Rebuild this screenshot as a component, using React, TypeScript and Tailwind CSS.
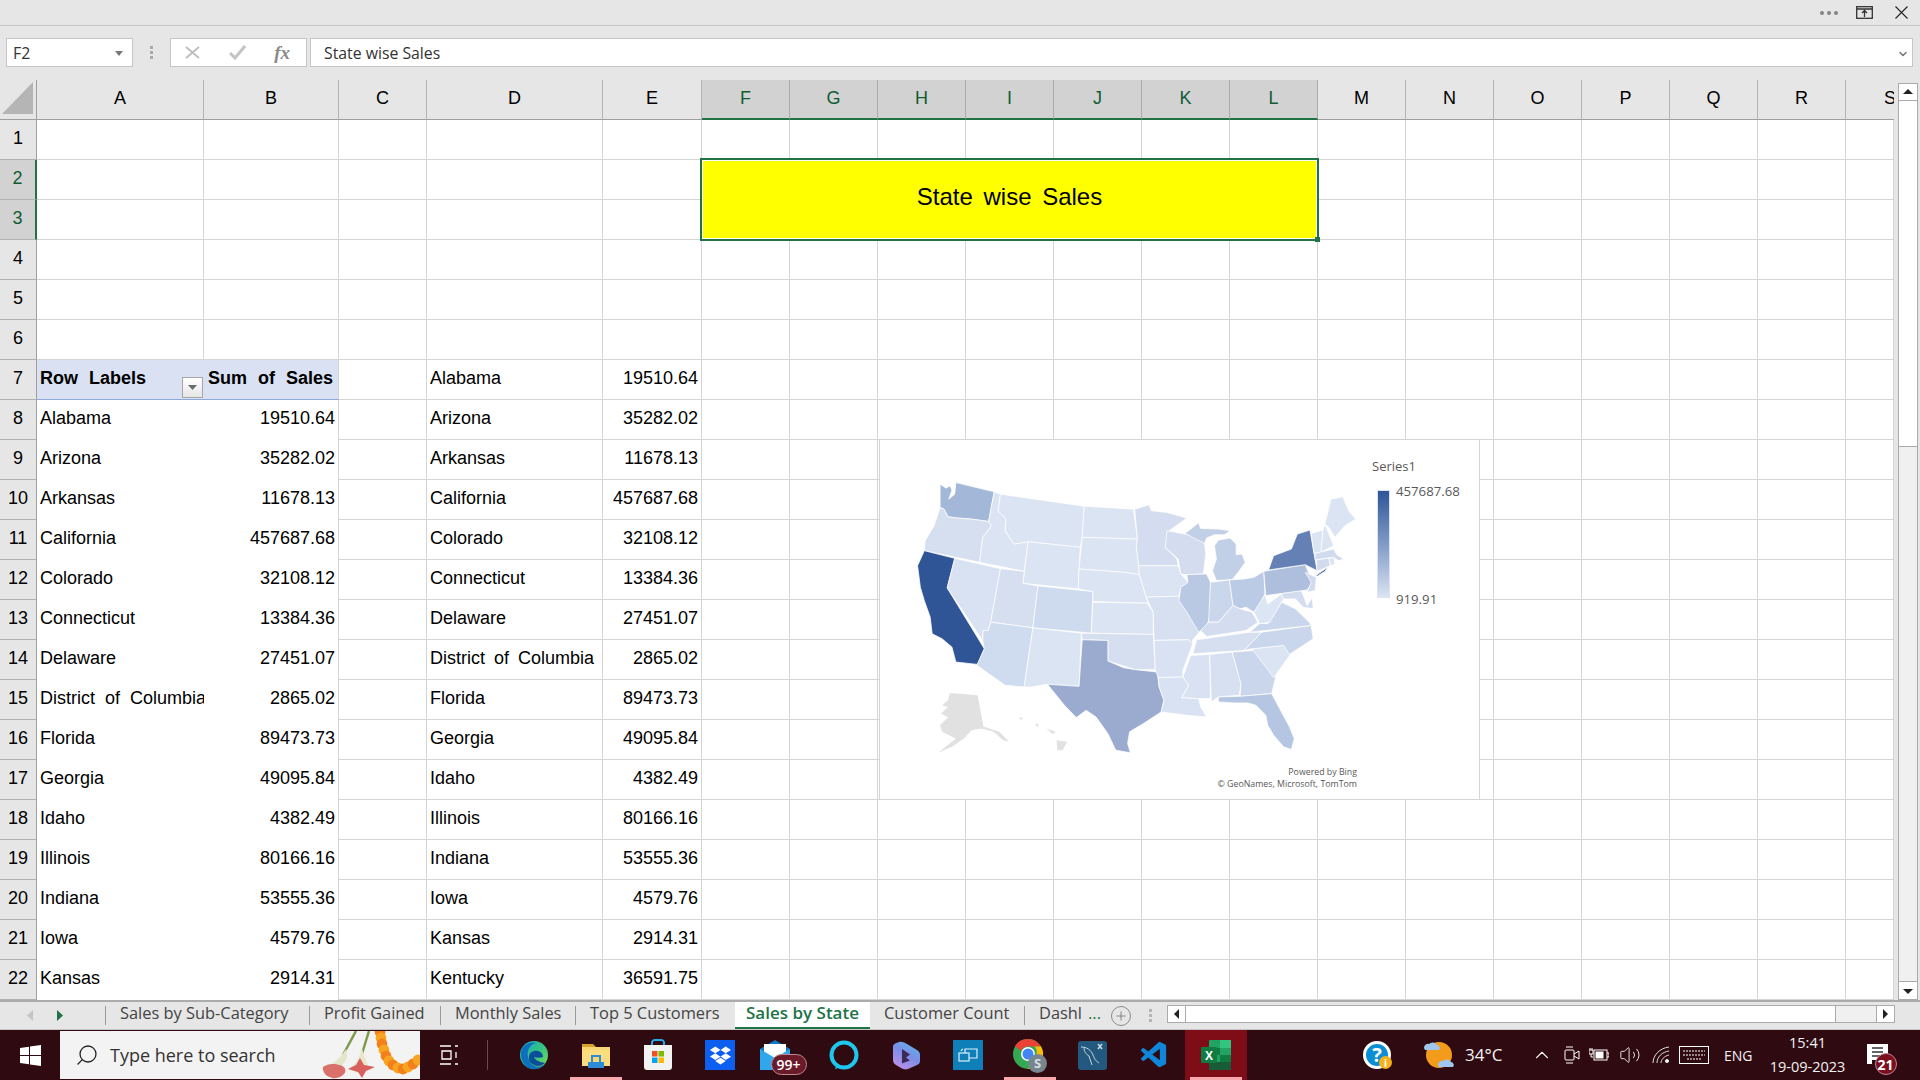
import React from "react";
import { FaDropbox } from "react-icons/fa";
import { VscVscode } from "react-icons/vsc";
import { Search, ChevronUp, Volume2, Plus, ChevronDown } from "lucide-react";

const COLS = ["A", "B", "C", "D", "E", "F", "G", "H", "I", "J", "K", "L", "M", "N", "O", "P", "Q", "R", "S"];
const left: [string, string][] = [
  ["Alabama", "19510.64"], ["Arizona", "35282.02"], ["Arkansas", "11678.13"], ["California", "457687.68"],
  ["Colorado", "32108.12"], ["Connecticut", "13384.36"], ["Delaware", "27451.07"], ["District of Columbia", "2865.02"],
  ["Florida", "89473.73"], ["Georgia", "49095.84"], ["Idaho", "4382.49"], ["Illinois", "80166.16"],
  ["Indiana", "53555.36"], ["Iowa", "4579.76"], ["Kansas", "2914.31"],
];
const right: [string, string][] = [...left, ["Kentucky", "36591.75"]];

const L = "#dbe4f3";
const states: [string, string][] = [
  ["175,160 190,172 200,165 205,178 197,205 212,190 215,155 312,183 298,272 255,265 220,262 195,258 185,235 175,230", "#a3b7d9"],
  ["175,230 185,235 195,258 220,262 255,265 298,272 305,285 283,320 275,395 135,360 137,330 160,285", "#d6dff0"],
  ["135,360 212,383 193,472 287,655 270,702 215,695 205,650 180,625 155,610 150,560 135,510 125,470 118,405", "#2f5597"],
  ["212,383 328,414 303,575 297,600 284,600 283,630 193,472", "#d9e2f2"],
  ["312,183 328,190 322,240 342,265 340,300 362,340 398,333 388,422 275,395 283,320 305,285 298,272", L],
  ["328,190 540,226 535,320 530,350 398,333 362,340 340,300 342,265 322,240", L],
  ["398,333 530,350 525,475 385,458", L],
  ["328,414 388,422 385,458 423,466 410,592 303,575", "#d6dff0"],
  ["303,575 410,592 388,770 340,765 268,705 287,655 283,630 284,600 297,600", "#cfdbef"],
  ["423,466 562,483 558,608 410,592", "#cedaee"],
  ["410,592 533,608 527,768 445,762 405,770 388,770", L],
  ["540,226 665,235 675,325 535,320", L],
  ["535,320 675,325 672,345 678,405 680,432 640,425 527,415", L],
  ["527,415 640,425 680,432 697,500 702,518 562,513 562,483 525,475", L],
  ["562,515 700,518 715,545 715,612 558,608", L],
  ["533,608 715,612 720,718 670,718 600,692 600,630 535,628", "#d6dff0"],
  ["535,628 600,630 600,692 640,712 670,718 725,725 730,770 742,810 735,845 690,880 655,905 650,940 657,968 620,960 600,910 570,860 545,840 520,862 490,825 447,762 527,768", "#9babd0"],
  ["668,235 705,222 710,240 750,245 800,262 755,300 745,350 775,385 778,405 678,405 672,345 675,325", "#d3ddef"],
  ["678,405 778,405 785,430 803,455 785,470 780,497 697,500 680,432", L],
  ["697,500 780,497 800,545 835,600 815,628 813,645 805,628 717,630 715,545", "#d7e0f1"],
  ["717,630 805,628 815,640 790,720 790,740 728,742 720,718", "#d9e2f2"],
  ["728,742 790,740 805,765 787,802 830,805 835,830 850,860 800,855 735,845 742,810 730,770", "#d9e2f2"],
  ["750,300 795,310 830,322 845,340 848,370 842,430 800,432 785,430 778,385 745,350", "#d3ddef"],
  ["800,432 850,430 860,455 858,560 850,590 830,605 800,545 780,510 785,470 803,455", "#b9c9e4"],
  ["870,345 880,328 910,322 925,340 925,372 940,370 948,395 930,425 915,447 875,450 865,420 875,385", "#c2d0e7"],
  ["795,308 815,290 830,276 835,293 880,295 910,300 895,312 870,312 850,322 845,338", "#c2d0e7"],
  ["860,455 908,448 917,525 880,575 855,575", "#c9d6eb"],
  ["908,448 945,445 970,440 995,422 998,490 985,520 970,545 950,530 935,535 917,525", "#bccbe5"],
  ["835,600 855,575 880,575 917,525 935,535 965,545 980,575 950,600 850,618", "#d3ddef"],
  ["815,670 825,628 960,605 990,605 945,660", "#d6dff0"],
  ["810,675 858,672 860,805 830,805 787,802 805,765 790,740", "#d9e2f2"],
  ["858,672 915,665 937,760 933,795 880,800 862,815", "#d7e0f1"],
  ["915,665 975,660 1025,740 1015,790 935,798 937,760", "#c9d6eb"],
  ["880,800 935,798 1015,790 1035,835 1060,890 1072,925 1065,958 1045,950 1020,915 1005,885 1000,855 975,825 955,818 920,818 880,815", "#b5c6e2"],
  ["965,655 1045,645 1065,668 1020,742", L],
  ["945,660 990,605 1115,585 1120,625 1060,672 1045,645 965,655", "#cad6eb"],
  ["960,605 985,578 1005,580 1040,515 1075,535 1110,575 1115,585", "#c9d6eb"],
  ["970,545 998,492 1005,520 1040,490 1045,505 1010,575 985,580", "#dce5f4"],
  ["1000,495 1090,480 1105,525 1118,500 1120,535 1095,530 1075,505 1045,505 1040,490", "#d3ddef"],
  ["995,422 1100,402 1118,455 1105,478 1000,495", "#aebfdd"],
  ["1100,425 1128,440 1125,480 1105,485 1115,455", "#d0dbee"],
  ["1007,418 1020,375 1065,355 1080,310 1112,298 1130,420 1100,402", "#6480b4"],
  ["1127,435 1157,410 1150,422 1130,437", "#2f5597"],
  ["1115,308 1145,298 1140,365 1122,368", L],
  ["1145,298 1150,280 1172,345 1140,365", L],
  ["1165,205 1195,198 1210,240 1228,265 1200,285 1175,320 1160,290 1150,280", L],
  ["1125,368 1172,355 1180,372 1197,385 1185,390 1170,380 1125,388", "#d0dbee"],
  ["1128,388 1160,382 1163,405 1130,422", "#d0dbee"],
  ["1160,382 1172,380 1175,400 1165,405", L],
];

function UsMap() {
  return (
    <svg viewBox="22.76 27 1517.4 1080" preserveAspectRatio="none" className="absolute inset-0 h-full w-full">
      {states.map(([p, c], i) => (
        <polygon key={i} points={p} fill={c} stroke="#fff" strokeWidth="2" strokeLinejoin="round" />
      ))}
      <polygon points="200,788 225,790 270,795 285,890 300,895 325,905 350,935 335,930 310,905 280,895 255,900 235,925 205,950 170,968 205,935 215,925 180,905 175,885 195,862 178,850 195,830 180,825 195,810" fill="#e1e1e1" />
      <polygon points="470,930 497,935 485,960 472,960" fill="#e1e1e1" />
      <polygon points="415,880 425,882 422,892" fill="#e1e1e1" />
      <polygon points="445,895 468,905 460,912" fill="#e1e1e1" />
      <polygon points="375,862 385,862 380,870" fill="#e1e1e1" />
    </svg>
  );
}

function Chart() {
  return (
    <div className="absolute left-[879px] top-[359px] h-[361px] w-[601px] border border-[#d4d4d4] bg-white font-['Open_Sans',sans-serif] text-[#595959]">
      <UsMap />
      <div className="absolute left-[492px] top-[17px] text-[13px]">Series1</div>
      <div className="absolute left-[497px] top-[50px] h-[108px] w-[13px] border border-[#dae3f3] bg-gradient-to-b from-[#2f5597] to-[#dae3f3]" />
      <div className="absolute left-[516px] top-[42px] text-[13.2px]">457687.68</div>
      <div className="absolute left-[516px] top-[150px] text-[13.2px]">919.91</div>
      <div className="absolute right-[122px] top-[326px] text-right text-[8.8px] leading-[12px]">
        <div>Powered by Bing</div>
        <div>© GeoNames, Microsoft, TomTom</div>
      </div>
    </div>
  );
}

function Cell({ r, c }: { r: number; c: number }) {
  const base = "overflow-hidden whitespace-nowrap border-r border-b border-[#d4d4d4] flex items-center pb-[3px] bg-white";
  const col = COLS[c];
  const plain = <div className={base} />;
  if ((c === 0 || c === 1) && r === 7) {
    if (c === 0)
      return (
        <div className="relative flex items-center overflow-hidden whitespace-nowrap border-b border-[#8ea9db] bg-[#d9e1f2] pb-[3px] pl-[3px] font-bold [word-spacing:6px]">
          Row Labels
          <span className="absolute right-[1px] top-[17px] flex h-[21px] w-[21px] items-center justify-center border border-[#a6a6a6] bg-gradient-to-b from-white to-[#e6e6e6]">
            <svg width="9" height="6" viewBox="0 0 9 6"><path d="M0 0h9L4.5 5z" fill="#6b6b6b" /></svg>
          </span>
        </div>
      );
    return (
      <div className="flex items-center justify-end whitespace-nowrap border-r border-b border-r-[#d4d4d4] border-b-[#8ea9db] bg-[#d9e1f2] pb-[3px] pr-[5px] font-bold [word-spacing:6px]">
        Sum of Sales
      </div>
    );
  }
  if ((c === 0 || c === 1) && r >= 8) {
    const row = left[r - 8];
    if (c === 0)
      return <div className="flex items-center overflow-hidden whitespace-nowrap bg-white pb-1 pl-[3px] [word-spacing:5px]">{row[0]}</div>;
    return <div className="flex items-center justify-end border-r border-[#d4d4d4] bg-white pb-1 pr-[3px]">{row[1]}</div>;
  }
  if (col === "D" && r >= 7) return <div className={base + " pl-[3px] [word-spacing:4px]"}>{right[r - 7][0]}</div>;
  if (col === "E" && r >= 7) return <div className={base + " justify-end pr-[3px]"}>{right[r - 7][1]}</div>;
  return plain;
}

function SheetGrid() {
  const cells: React.ReactNode[] = [];
  cells.push(
    <div key="corner" className="flex items-center justify-end border-r border-b border-[#9f9f9f] bg-[#e6e6e6] pb-[3px] pr-[3px]">
      <svg width="31" height="32" viewBox="0 0 31 32"><path d="M31 0v32H0z" fill="#b5b5b5" /></svg>
    </div>
  );
  COLS.forEach((c, i) => {
    const sel = i >= 5 && i <= 11;
    cells.push(
      <div
        key={c}
        className={
          sel
            ? "flex items-center justify-center border-r border-b-2 border-r-[#ababab] border-b-[#217346] bg-[#d2d2d2] pb-[2px] text-[#0f5c33]"
            : c === "S"
              ? "flex items-center justify-start overflow-hidden border-b border-[#9f9f9f] bg-[#e6e6e6] pb-[3px] pl-[38px]"
              : "flex items-center justify-center border-r border-b border-r-[#b4b4b4] border-b-[#9f9f9f] bg-[#e6e6e6] pb-[3px]"
        }
      >
        {c}
      </div>
    );
  });
  for (let r = 1; r <= 22; r++) {
    const selRow = r === 2 || r === 3;
    cells.push(
      <div
        key={"h" + r}
        className={
          selRow
            ? "flex items-center justify-center border-r-2 border-b border-r-[#217346] border-b-[#b1b1b1] bg-[#d2d2d2] pb-[3px] text-[#0f5c33]"
            : "flex items-center justify-center border-r border-b border-r-[#9f9f9f] border-b-[#b1b1b1] bg-[#e6e6e6] pb-[3px]"
        }
      >
        {r}
      </div>
    );
    COLS.forEach((_, c) => {
      if ((r === 2 || r === 3) && c >= 5 && c <= 11) {
        if (r === 2 && c === 5)
          cells.push(
            <div
              key="merged"
              className="relative col-[7/14] row-[3/5] -ml-[2px] -mr-[1px] -mt-[2px] -mb-[1px] flex items-center justify-center border-2 border-[#217346] bg-[#ffff00] pb-[6px] text-[24px] [word-spacing:4px] outline outline-1 -outline-offset-3 outline-white"
            >
              State wise Sales
              <span className="absolute -bottom-[3px] -right-[3px] h-[5px] w-[5px] bg-[#217346]" />
            </div>
          );
        return;
      }
      cells.push(<Cell key={r + "-" + c} r={r} c={c} />);
    });
  }
  return (
    <div className="grid h-[920px] w-[1894px] grid-cols-[37px_167px_135px_88px_176px_99px_repeat(13,88px)_48px] grid-rows-[repeat(23,40px)] border-r border-[#a6a6a6] font-['Liberation_Sans',Arial,sans-serif] text-[18px] text-black">
      {cells}
    </div>
  );
}

function Arrow({ d }: { d: "u" | "d" | "l" | "r" }) {
  const p = { u: "M1 7 L6 2 L11 7z", d: "M1 3 L11 3 L6 8z", l: "M8 0 L3 5 L8 10z", r: "M3 0 L8 5 L3 10z" }[d];
  return <svg width="12" height="10" viewBox="0 0 12 10"><path d={p} fill="#222" /></svg>;
}

function VScroll() {
  return (
    <div className="flex h-[920px] w-[26px] flex-col bg-[#e6e6e6] pl-[4px] pr-[2px] pt-[3px]">
      <div className="flex h-[18px] items-center justify-center border border-[#ababab] bg-white"><Arrow d="u" /></div>
      <div className="h-[346px] border-x border-b border-[#ababab] bg-white" />
      <div className="flex-1 border-x border-[#ababab] bg-[#f0f0f0]" />
      <div className="flex h-[19px] items-center justify-center border border-[#ababab] bg-white"><Arrow d="d" /></div>
    </div>
  );
}

function TitleBar() {
  return (
    <div className="flex h-[26px] items-center justify-end border-b border-[#c6c6c6] bg-[#e6e6e6] pr-[12px]">
      <div className="mr-[18px] flex gap-[3px]">
        <span className="h-[4px] w-[4px] rounded-full bg-[#858585]" />
        <span className="h-[4px] w-[4px] rounded-full bg-[#858585]" />
        <span className="h-[4px] w-[4px] rounded-full bg-[#858585]" />
      </div>
      <svg width="17" height="13" viewBox="0 0 17 13" className="mr-[22px]" fill="none" stroke="#333" strokeWidth="1.3">
        <rect x=".7" y=".7" width="15.6" height="11.6" />
        <path d="M1 3h15M8.5 11V5M6 7l2.5-2.5L11 7" />
      </svg>
      <svg width="13" height="13" viewBox="0 0 13 13" fill="none" stroke="#222" strokeWidth="1.1">
        <path d="M.5.5l12 12M12.5.5l-12 12" />
      </svg>
    </div>
  );
}

function FormulaBar() {
  return (
    <div className="flex h-[54px] items-start bg-[#e6e6e6] pl-[6px] pr-[7px] pt-[12px] font-['Open_Sans',sans-serif] text-[15.8px] text-[#333]">
      <div className="flex h-[29px] w-[127px] items-center justify-between border border-[#c6c6c6] bg-white pl-[6px] pr-[9px] pt-[2px]">
        F2
        <svg width="8" height="5" viewBox="0 0 8 5"><path d="M0 0h8L4 5z" fill="#777" /></svg>
      </div>
      <div className="flex h-[29px] w-[37px] flex-col items-center justify-center gap-[2px]">
        <span className="h-[3px] w-[3px] bg-[#aaa]" />
        <span className="h-[3px] w-[3px] bg-[#aaa]" />
        <span className="h-[3px] w-[3px] bg-[#aaa]" />
      </div>
      <div className="flex h-[29px] w-[137px] items-center justify-between border border-[#c6c6c6] bg-white pl-[14px] pr-[16px]">
        <svg width="15" height="13" viewBox="0 0 15 13" fill="none" stroke="#bdbdbd" strokeWidth="1.8"><path d="M1 1l13 11M14 1L1 12" /></svg>
        <svg width="17" height="15" viewBox="0 0 17 15" fill="none" stroke="#c4c4c4" strokeWidth="3"><path d="M1 8l5 5L16 1" /></svg>
        <span className="font-['Liberation_Serif',serif] text-[19px] font-bold italic leading-none text-[#8a8a8a]">fx</span>
      </div>
      <div className="ml-[3px] flex h-[29px] flex-1 items-center justify-between border border-[#c6c6c6] bg-white pl-[13px] pr-[3px] pt-[2px]">
        State wise Sales
        <ChevronDown size={12} strokeWidth={3} color="#777" />
      </div>
    </div>
  );
}

function TabBar() {
  const tabs: [string, string][] = [
    ["Sales by Sub-Category", "w-[204px]"],
    ["Profit Gained", "w-[131px]"],
    ["Monthly Sales", "w-[135px]"],
    ["Top 5 Customers", "w-[160px]"],
  ];
  return (
    <div className="flex h-[30px] items-stretch border-t-2 border-b border-t-[#ababab] border-b-[#c6c6c6] bg-[#e6e6e6] font-['Open_Sans',sans-serif] text-[16.4px] text-[#444]">
      <div className="flex w-[105px] items-center pl-[27px]">
        <svg width="7" height="11" viewBox="0 0 7 11"><path d="M6 0L0 5.5 6 11z" fill="#c4c4c4" /></svg>
        <svg width="7" height="11" viewBox="0 0 7 11" className="ml-[22px]"><path d="M1 0l6 5.5L1 11z" fill="#217346" /></svg>
      </div>
      {tabs.map(([t, w]) => (
        <div key={t} className={"flex items-center whitespace-nowrap " + w}>
          <span className="mr-[14px] h-[19px] w-px bg-[#9a9a9a]" />
          <span className="-mt-[5px]">{t}</span>
        </div>
      ))}
      <div className="flex w-[135px] items-center justify-center whitespace-nowrap border-b-2 border-[#217346] bg-white pb-[3px] text-[17px] font-semibold text-[#217346]">Sales by State</div>
      <div className="flex w-[154px] items-center whitespace-nowrap pb-[5px] pl-[14px]">Customer Count</div>
      <div className="flex w-[81px] items-center whitespace-nowrap">
        <span className="mr-[14px] h-[19px] w-px shrink-0 bg-[#9a9a9a]" />
        <span className="-mt-[5px]">Dashl</span>
        <span className="-mt-[5px] ml-[6px] text-[#217346]">...</span>
      </div>
      <div className="ml-[6px] flex w-[21px] items-center">
        <span className="flex h-[20px] w-[20px] items-center justify-center rounded-full border border-[#8a8a8a]"><Plus size={14} color="#777" strokeWidth={1.5} /></span>
      </div>
      <div className="ml-[16px] flex w-[5px] flex-col items-center justify-center gap-[2px]">
        <span className="h-[3px] w-[3px] bg-[#b5b5b5]" />
        <span className="h-[3px] w-[3px] bg-[#b5b5b5]" />
        <span className="h-[3px] w-[3px] bg-[#b5b5b5]" />
      </div>
      <div className="ml-[14px] mt-[3px] flex h-[18px] w-[728px] border border-[#ababab]">
        <div className="flex w-[18px] items-center justify-center border-r border-[#ababab] bg-white"><Arrow d="l" /></div>
        <div className="w-[650px] border-r border-[#ababab] bg-white" />
        <div className="flex-1 bg-[#f0f0f0]" />
        <div className="flex w-[18px] items-center justify-center border-l border-[#ababab] bg-white"><Arrow d="r" /></div>
      </div>
    </div>
  );
}

function Slot({ children, active, line }: { children: React.ReactNode; active?: boolean; line?: boolean }) {
  return (
    <div className={"relative flex h-full w-[62px] items-center justify-center " + (active ? "bg-[#7f0d17]" : "")}>
      {children}
      {line ? <span className="absolute bottom-0 left-[5px] right-[5px] h-[3px] bg-[#f9a8ae]" /> : null}
    </div>
  );
}

function Garland() {
  const dots = [[380, 1], [381, 7], [382, 13], [384, 19], [386, 25], [389, 30], [393, 34], [398, 37], [403, 38], [408, 36], [413, 33], [418, 29]];
  return (
    <svg width="100" height="48" viewBox="320 0 100 48" className="absolute right-0 top-0">
      <path d="M356 0 L343 24 M369 0 L361 26" stroke="#7d9a4d" strokeWidth="2.5" fill="none" />
      <path d="M346 18 C350 28 343 36 334 38 C328 44 322 38 324 36 C332 34 340 28 346 18z" fill="#e3e6c8" />
      <path d="M362 18 C366 28 366 34 372 38 L358 42 L348 38 C356 34 358 28 362 18z" fill="#e9e6cb" />
      <path d="M323 36 C330 30 345 34 345 38 C348 44 335 50 330 46 C326 46 322 40 323 36z" fill="#d9706a" />
      <path d="M348 38 L356 34 L360 27 L364 34 L375 36 L366 40 L362 47 L358 41z" fill="#d8615e" />
      {dots.map(([x, y], i) => (
        <circle key={i} cx={x} cy={y} r="5.4" fill={i % 2 ? "#f7a520" : "#f3801a"} />
      ))}
    </svg>
  );
}

function Edge() {
  return (
    <svg width="30" height="30" viewBox="0 0 30 30">
      <defs>
        <linearGradient id="eg" x1="0" y1="0" x2="1" y2="1"><stop offset="0" stopColor="#1fa3c9" /><stop offset=".5" stopColor="#33c481" /><stop offset="1" stopColor="#7ddc58" /></linearGradient>
      </defs>
      <circle cx="15" cy="15" r="14" fill="url(#eg)" />
      <path d="M2 14C2 5 11 1 17 3 9 5 7 13 10 20c2 6 10 10 17 3-4 6-11 7-15 6C6 28 2 21 2 14z" fill="#0c70bc" />
      <path d="M10 17c0-5 5-7 9-6 4 1 5 4 5 6-3 1-6 1-9 0 1 3 5 5 11 6-5 5-12 3-15-1-1-2-1-3-1-5z" fill="#0b4d9a" />
    </svg>
  );
}

function Folder() {
  return (
    <svg width="28" height="26" viewBox="0 0 28 26">
      <path d="M0 2h11l3 3H0z" fill="#d9a22f" />
      <rect x="0" y="5" width="28" height="19" fill="#f7d774" />
      <path d="M0 8h28v16H0z" fill="#fbdd7f" />
      <path d="M9 13h10v7h3v6H6v-6h3z" fill="#2e8bd8" />
      <rect x="11" y="15" width="6" height="5" fill="#f7d774" />
    </svg>
  );
}

function Store() {
  return (
    <svg width="30" height="32" viewBox="0 0 30 32">
      <path d="M9 6V3a3 3 0 0 1 3-2h6a3 3 0 0 1 3 2v3" stroke="#28a8ea" strokeWidth="2" fill="none" />
      <path d="M1 6h28v22a3 3 0 0 1-3 3H4a3 3 0 0 1-3-3z" fill="#f2f2f2" />
      <rect x="9" y="12" width="5.5" height="5.5" fill="#f25022" />
      <rect x="15.5" y="12" width="5.5" height="5.5" fill="#7fba00" />
      <rect x="9" y="18.5" width="5.5" height="5.5" fill="#00a4ef" />
      <rect x="15.5" y="18.5" width="5.5" height="5.5" fill="#ffb900" />
    </svg>
  );
}

function Mail() {
  return (
    <div className="relative h-[30px] w-[45px]">
      <svg width="30" height="30" viewBox="0 0 30 30" className="absolute left-0 top-0">
        <path d="M0 9L15 0l15 9v20H0z" fill="#0f78c8" />
        <rect x="4" y="4" width="22" height="14" fill="#fff" />
        <path d="M0 9l15 9 15-9v21H0z" fill="#30a7ec" />
      </svg>
      <span className="absolute left-[11px] top-[14px] flex h-[21px] w-[36px] items-center justify-center rounded-full border border-[#c08a93] bg-[#6b1a2a] font-['Open_Sans',sans-serif] text-[14px] font-semibold leading-none text-white">99+</span>
    </div>
  );
}

function Alexa() {
  return (
    <svg width="30" height="30" viewBox="0 0 30 30">
      <circle cx="15" cy="15" r="12.5" fill="none" stroke="#1fc6ee" strokeWidth="4" />
      <path d="M7 26l-1 3 6-2z" fill="#1fc6ee" />
    </svg>
  );
}

function Copilot() {
  return (
    <svg width="27" height="29" viewBox="0 0 27 29">
      <defs>
        <linearGradient id="cp" x1="0.9" y1="0" x2="0.3" y2="1"><stop offset="0" stopColor="#58b7e8" /><stop offset=".5" stopColor="#7b8fe8" /><stop offset="1" stopColor="#bb8ee8" /></linearGradient>
      </defs>
      <path d="M6 1C9 0 12 2 14 3L24 9C26 10 27 12 27 14L27 20C27 22 26 23 24 24L15 28C12 29 10 28 8 27L3 24C1 23 0 21 0 19L0 6C0 3 3 2 6 1z" fill="url(#cp)" />
      <path d="M9 8l8 5.5-4 3 4 3-8 3z" fill="#3a2a55" />
    </svg>
  );
}

function Remote() {
  return (
    <div className="flex h-[30px] w-[30px] items-center justify-center bg-[#0f7fb9]">
      <svg width="20" height="18" viewBox="0 0 20 18" fill="none" stroke="#dff2fb" strokeWidth="1.2">
        <rect x="1" y="7" width="10" height="8" />
        <path d="M7 7V3h12v9h-8" />
        <path d="M3 5a4 4 0 0 1 2-2" />
      </svg>
    </div>
  );
}

function Chrome() {
  return (
    <div className="relative h-[32px] w-[34px]">
      <svg width="30" height="30" viewBox="0 0 30 30" className="absolute left-0 top-0">
        <circle cx="15" cy="15" r="15" fill="#34a853" />
        <path d="M15 0a15 15 0 0 1 13 7.5H15a7.5 7.5 0 0 0-7 4.5L2 7A15 15 0 0 1 15 0z" fill="#ea4335" />
        <path d="M28 7.5A15 15 0 0 1 15 30l6.5-11.5a7.5 7.5 0 0 0 0-11z" fill="#fbbc05" />
        <circle cx="15" cy="15" r="7" fill="#fff" />
        <circle cx="15" cy="15" r="5.5" fill="#4285f4" />
      </svg>
      <span className="absolute bottom-[-2px] right-[0px] flex h-[19px] w-[19px] items-center justify-center rounded-full bg-[#77868e] font-['Open_Sans',sans-serif] text-[13px] font-bold text-[#d9dde0]">S</span>
    </div>
  );
}

function MySql() {
  return (
    <div className="flex h-[29px] w-[29px] items-center justify-center rounded-[3px] bg-[#24597f]">
      <svg width="26" height="26" viewBox="0 0 26 26" fill="none" stroke="#c5d4de" strokeWidth="1">
        <path d="M2 5c6 0 10 3 12 8s3 6 6 8M5 5c0 5 2 7 5 9l3 9" />
        <path d="M19 2l4 5M23 2l-4 5" strokeWidth="1.6" />
      </svg>
    </div>
  );
}

function Excel() {
  return (
    <svg width="30" height="30" viewBox="0 0 30 30">
      <rect x="8" y="0" width="22" height="30" rx="1" fill="#21a366" />
      <rect x="8" y="8" width="11" height="7" fill="#107c41" />
      <rect x="19" y="0" width="11" height="8" fill="#33c481" />
      <rect x="19" y="15" width="11" height="7" fill="#107c41" />
      <rect x="8" y="22" width="22" height="8" fill="#185c37" />
      <rect x="0" y="7" width="16" height="16" rx="1" fill="#107c41" />
      <text x="8" y="19.5" textAnchor="middle" fontFamily="Liberation Sans" fontWeight="700" fontSize="12" fill="#fff">X</text>
    </svg>
  );
}

function Taskbar() {
  return (
    <div className="flex h-[50px] items-center bg-[#2f0a10] font-['Open_Sans',sans-serif] text-[#f2f2f2]">
      <div className="flex h-full w-[60px] items-center justify-center">
        <svg width="21" height="21" viewBox="0 0 21 21" fill="#fff">
          <path d="M0 3l9-1.3V10H0zM10 1.5L21 0v10H10zM0 11h9v8.3L0 18zM10 11h11v10l-11-1.5z" />
        </svg>
      </div>
      <div className="relative flex h-[48px] w-[360px] items-center overflow-hidden bg-[#f3f3f3] pl-[15px] text-[#333]">
        <Search size={24} strokeWidth={1.3} className="-scale-x-100" color="#222" />
        <span className="ml-[11px] text-[18px]">Type here to search</span>
        <Garland />
      </div>
      <div className="flex h-full w-[58px] items-center justify-center">
        <svg width="20" height="20" viewBox="0 0 20 20" fill="none" stroke="#fff" strokeWidth="1.3">
          <path d="M1 1h11M1 19h11M3 6h9v8H3zM16 1h3M16 19h3M17 7v6" />
        </svg>
      </div>
      <span className="ml-[9px] mr-[15px] h-[30px] w-px bg-[#6b4a4e]" />
      <Slot><Edge /></Slot>
      <Slot line><Folder /></Slot>
      <Slot><Store /></Slot>
      <Slot><div className="flex h-[30px] w-[30px] items-center justify-center bg-[#0d5ff0]"><FaDropbox size={21} color="#fff" /></div></Slot>
      <Slot><Mail /></Slot>
      <Slot><Alexa /></Slot>
      <Slot><Copilot /></Slot>
      <Slot><Remote /></Slot>
      <Slot line><Chrome /></Slot>
      <Slot><MySql /></Slot>
      <Slot><VscVscode size={31} color="#0f86d9" /></Slot>
      <Slot active line><Excel /></Slot>
      <div className="ml-[115px] flex h-[30px] w-[30px] items-center justify-center">
        <div className="relative flex h-[28px] w-[28px] items-center justify-center rounded-full border-[3px] border-white bg-[#0a8fd6] text-[20px] font-bold leading-none text-white">
          ?
          <span className="absolute -bottom-[3px] -right-[4px] flex h-[13px] w-[13px] items-center justify-center rounded-full bg-[#f5b21a] text-[10px] text-white">i</span>
        </div>
      </div>
      <div className="ml-[32px] flex items-center">
        <svg width="30" height="30" viewBox="0 0 30 30">
          <circle cx="15" cy="15" r="13" fill="#f39c1c" />
          <path d="M0 8a4 4 0 0 1 5-4 5 5 0 0 1 8 1 3 3 0 0 1 2 5H1z" fill="#9fc7ee" />
          <path d="M14 25a4 4 0 0 1 5-4 5 5 0 0 1 8 1 3 3 0 0 1 2 5H15z" fill="#9fc7ee" />
        </svg>
        <span className="ml-[11px] w-[60px] text-[17px]">34°C</span>
      </div>
      <ChevronUp size={22} strokeWidth={1.2} className="ml-[6px]" />
      <svg width="16" height="20" viewBox="0 0 16 20" className="ml-[11px]" fill="none" stroke="#fff" strokeWidth="1">
        <rect x="1" y="5" width="9" height="10" rx="1" />
        <path d="M10 9l5-3v8l-5-3M2 2h7M2 18h7" />
      </svg>
      <svg width="20" height="14" viewBox="0 0 20 14" className="ml-[9px]" fill="none" stroke="#fff" strokeWidth="1">
        <path d="M0 2h4v4H0zM1 0v2M3 0v2M2 6v3h2" />
        <rect x="5" y="2" width="13" height="10" />
        <rect x="7" y="4" width="7" height="6" fill="#fff" />
        <path d="M18 5h2v4h-2" />
      </svg>
      <Volume2 size={22} strokeWidth={1} className="ml-[10px]" />
      <svg width="20" height="18" viewBox="0 0 20 18" className="ml-[11px]" fill="none" stroke="#ddd" strokeWidth="1">
        <path d="M1 17C1 9 8 2 17 1M5 17C5 11 10 6 17 5M9 17c0-3 3-7 8-8" />
        <circle cx="15" cy="15" r="1.6" fill="#fff" />
      </svg>
      <svg width="30" height="18" viewBox="0 0 30 18" className="ml-[7px]" fill="none" stroke="#fff" strokeWidth="1">
        <rect x=".5" y=".5" width="29" height="17" />
        <path d="M4 5h22M4 9h22M8 13h14" strokeDasharray="2 1" />
      </svg>
      <span className="ml-[15px] text-[14px]">ENG</span>
      <div className="ml-[16px] flex w-[78px] flex-col items-center text-[14.5px] leading-[24px]">
        <span>15:41</span>
        <span>19-09-2023</span>
      </div>
      <div className="relative ml-[20px] h-[30px] w-[24px]">
        <svg width="21" height="21" viewBox="0 0 21 21" className="absolute left-0 top-[4px]">
          <path d="M0 0h21v16H5v4H0z" fill="#fff" />
          <path d="M5 4h11M5 8h11M5 12h8" stroke="#333" strokeWidth="1.3" />
        </svg>
        <span className="absolute left-[8px] top-[13px] flex h-[22px] w-[22px] items-center justify-center rounded-full border border-[#c08a93] bg-[#7b0f1e] text-[14px] font-bold text-white">21</span>
      </div>
    </div>
  );
}

export default function App() {
  return (
    <div className="flex h-[1080px] w-[1920px] flex-col overflow-hidden bg-white">
      <TitleBar />
      <FormulaBar />
      <div className="relative flex h-[920px]">
        <SheetGrid />
        <VScroll />
        <Chart />
      </div>
      <TabBar />
      <Taskbar />
    </div>
  );
}
